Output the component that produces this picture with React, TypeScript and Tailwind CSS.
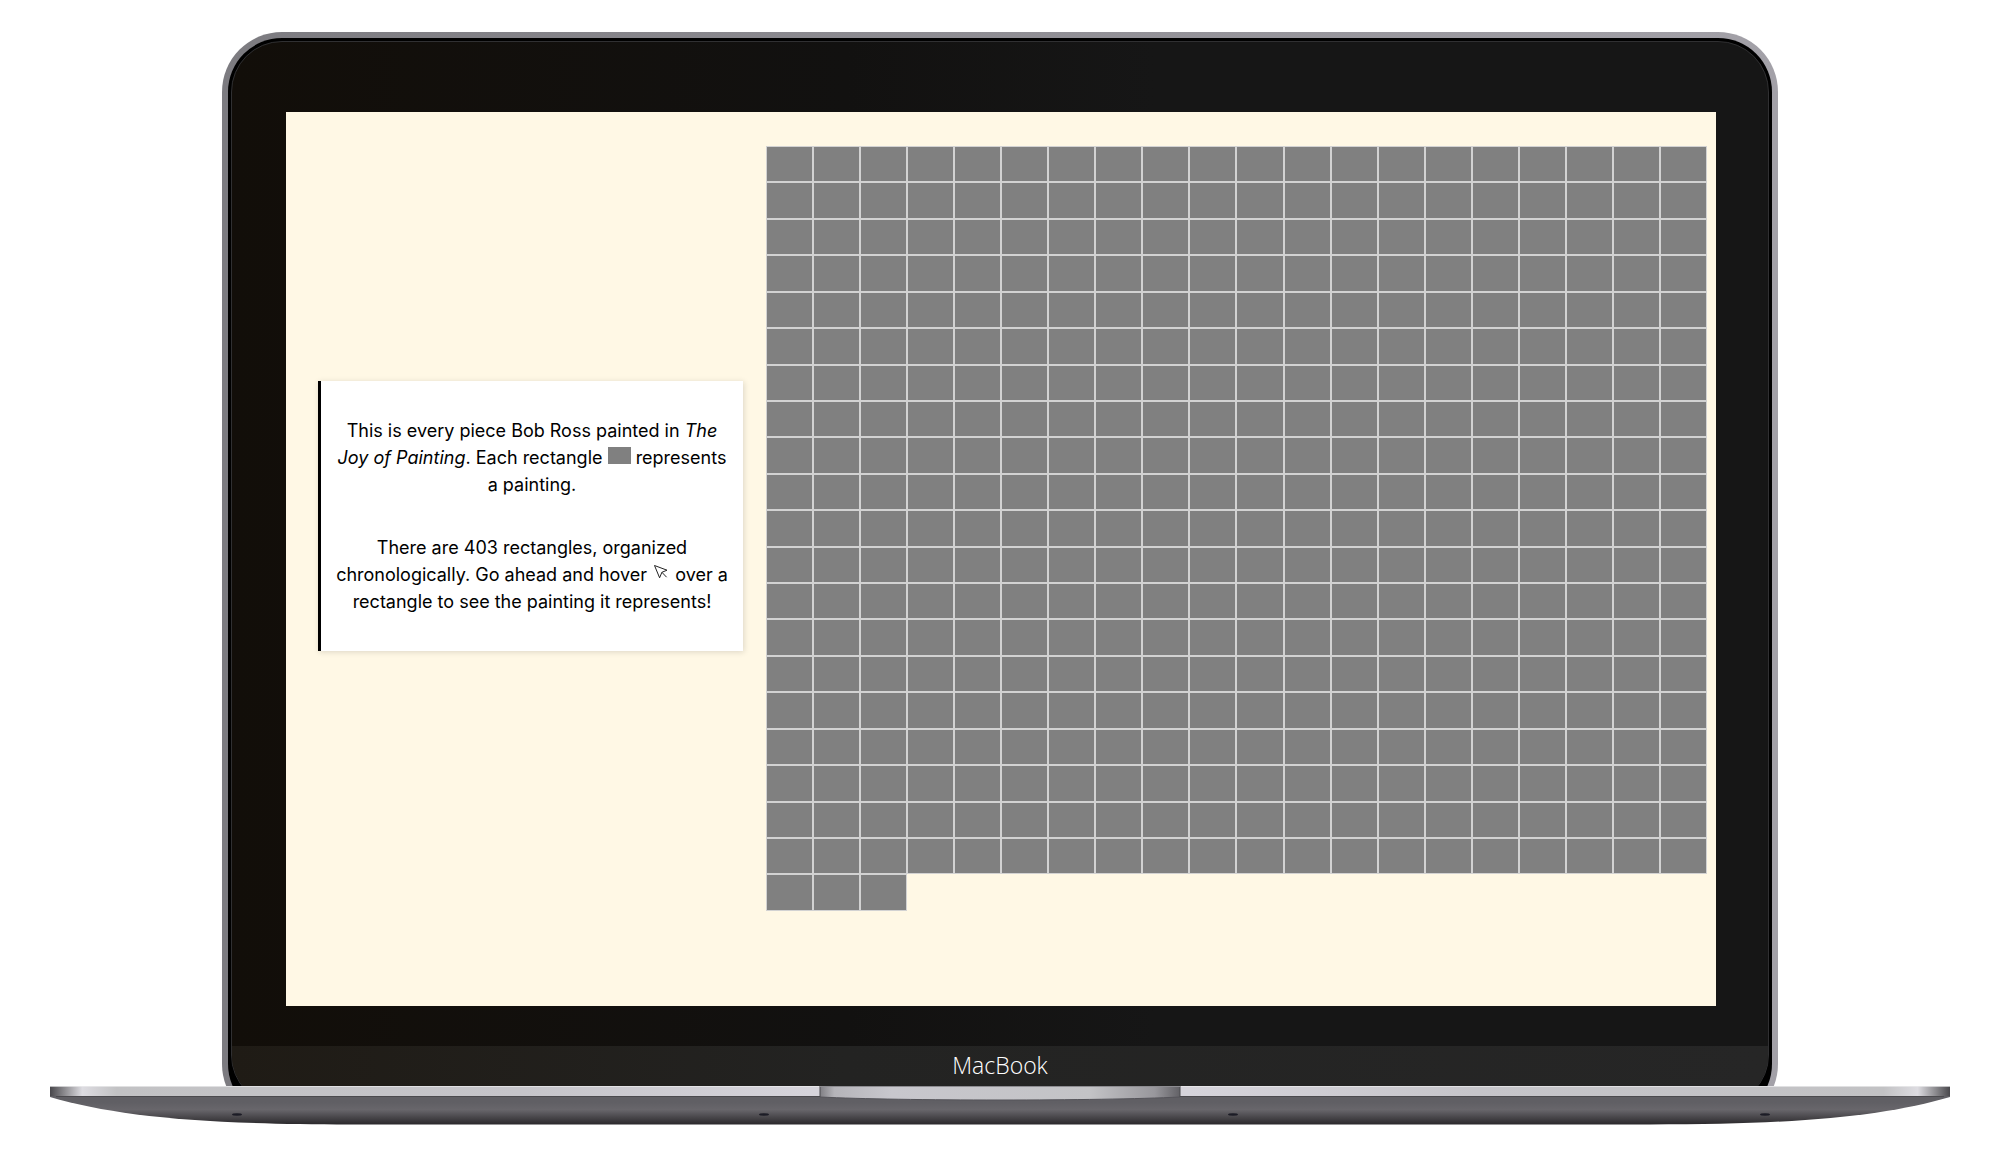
const PAINTINGS = Array.from({ length: 403 }, (_, i) => i + 1);
const SCREWS = [187, 714, 1183, 1715];

function PointerIcon() {
  return (
    <svg viewBox="0 0 16 16" className="mx-px inline-block size-4 align-baseline" fill="none" stroke="#222" strokeWidth="1" aria-hidden="true">
      <path d="M1.5 0.5 L14 5.2 L8.9 7.3 L6.6 12.8 Z M8.9 7.3 L13.6 12.2" />
    </svg>
  );
}

function StoryCard() {
  return (
    <section className="mt-[235px] flex w-[425px] shrink-0 flex-col gap-9 self-start border-l-3 border-black bg-white px-3 py-9 text-center font-['Inter',sans-serif] text-[18px] leading-[27px] text-black shadow-[1px_1px_6px_rgba(0,0,0,0.14)]">
      <p>
        This is every piece Bob Ross painted in <em>The<br />Joy of Painting</em>. Each rectangle{" "}
        <span className="inline-block h-[17px] w-[23px] bg-[#808080] align-baseline" /> represents
        <br />a painting.
      </p>
      <p>
        There are 403 rectangles, organized
        <br />
        chronologically. Go ahead and hover <PointerIcon /> over a
        <br />
        rectangle to see the painting it represents!
      </p>
    </section>
  );
}

function PaintingGrid() {
  return (
    <ol className="mr-[9px] grid min-w-0 flex-1 grid-cols-20 self-start">
      {PAINTINGS.map((n) => (
        <li key={n} className="aspect-[31/24] border border-[#d2d2d2] bg-[#808080]" />
      ))}
    </ol>
  );
}

function LaptopBase() {
  return (
    <svg viewBox="0 0 1900 40" className="mx-auto block w-[95%]" aria-hidden="true">
      <defs>
        <linearGradient id="body" x1="0" y1="0" x2="0" y2="1">
          <stop offset="0.25" stopColor="#605f64" />
          <stop offset="0.5" stopColor="#68666b" />
          <stop offset="0.75" stopColor="#49474b" />
          <stop offset="1" stopColor="#2a282b" />
        </linearGradient>
        <linearGradient id="deck" x1="0" y1="0" x2="1" y2="0">
          <stop offset="0" stopColor="#48474b" />
          <stop offset="0.008" stopColor="#8f8e92" />
          <stop offset="0.017" stopColor="#dddce1" />
          <stop offset="0.035" stopColor="#c2c2c4" />
          <stop offset="0.25" stopColor="#c6c5ca" />
          <stop offset="0.4" stopColor="#d6d4db" />
          <stop offset="0.6" stopColor="#d6d4db" />
          <stop offset="0.75" stopColor="#c6c5ca" />
          <stop offset="0.965" stopColor="#c2c2c4" />
          <stop offset="0.983" stopColor="#dddce1" />
          <stop offset="0.992" stopColor="#8f8e92" />
          <stop offset="1" stopColor="#48474b" />
        </linearGradient>
        <linearGradient id="notch" x1="0" y1="0" x2="1" y2="0">
          <stop offset="0" stopColor="#807f84" />
          <stop offset="0.04" stopColor="#b5b4b9" />
          <stop offset="0.2" stopColor="#c8c7cd" />
          <stop offset="0.75" stopColor="#c3c3c6" />
          <stop offset="0.93" stopColor="#98979c" />
          <stop offset="1" stopColor="#626166" />
        </linearGradient>
      </defs>
      <path d="M0 9 H1900 V11 C1835 30 1750 38.5 1600 38.5 H300 C150 38.5 65 30 0 11 Z" fill="url(#body)" />
      <rect width="1900" height="10" fill="url(#deck)" />
      <rect width="1900" height="1" fill="#ececee" opacity="0.7" />
      <rect x="6" y="10" width="1888" height="1" fill="#4b4a4e" />
      <path d="M770 0 H1130 V11 C1050 15 850 15 770 11 Z" fill="url(#notch)" />
      <path d="M770 11 C850 15 1050 15 1130 11" fill="none" stroke="#55545a" />
      <path d="M770 0 V11 M1130 0 V11" stroke="#4b4a4e" />
      <rect x="770" width="360" height="1" fill="#8d8c91" />
      {SCREWS.map((x) => (
        <ellipse key={x} cx={x} cy="28.5" rx="5" ry="1.2" fill="#1c1c26" />
      ))}
    </svg>
  );
}

export default function App() {
  return (
    <main className="min-h-screen bg-white pt-8">
      <div className="mx-auto w-[77.8%] overflow-hidden">
        <div className="-mb-[38px] rounded-[60px] bg-linear-to-r from-[#7c7b80] to-[#a3a1a8] p-1.5">
          <div className="rounded-[54px] bg-black p-[3px] pb-3">
            <div className="overflow-hidden rounded-[51px] border border-[#303032] bg-linear-to-r from-[#120e09] via-[#121110] via-40% to-[#161616] to-60%">
              <div className="pt-[70px] pr-[52px] pl-[54px]">
                <div className="flex aspect-[8/5] gap-[23px] bg-[#fff8e5] pt-[34px] pl-8">
                  <StoryCard />
                  <PaintingGrid />
                </div>
              </div>
              <div className="mt-10 flex h-[59px] items-center justify-center bg-linear-to-r from-[#1f1b15] via-[#232322] via-40% to-[#262626] pb-[19px] font-['Open_Sans',sans-serif] text-[23px] leading-none font-light text-white">
                MacBook
              </div>
            </div>
          </div>
        </div>
      </div>
      <LaptopBase />
    </main>
  );
}
